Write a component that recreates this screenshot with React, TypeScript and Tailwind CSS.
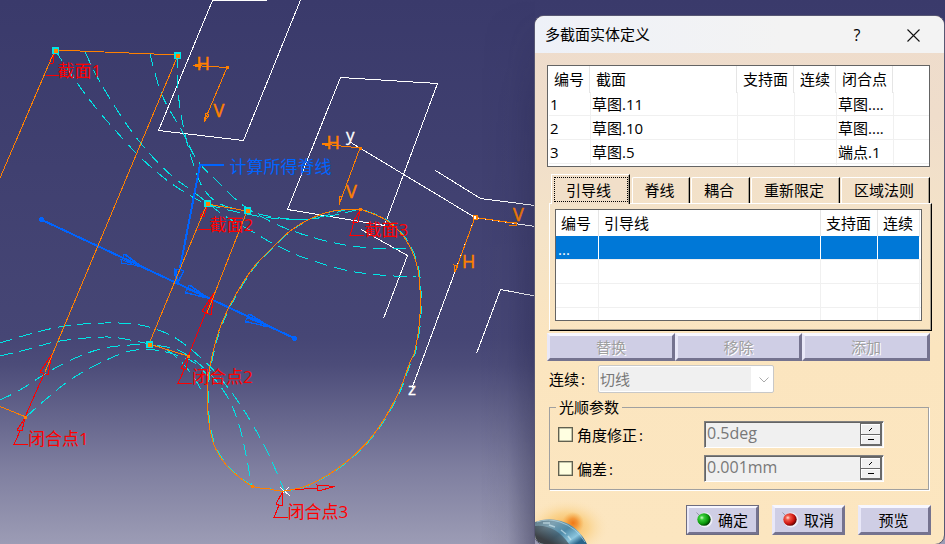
import React from "react";

type Pt = [number, number];

const UI_FONT = "font-['Open_Sans','Noto_Sans_CJK_SC',sans-serif]";

/* Smooth curve through a list of points */
function spline(p: Pt[]): string {
  let d = `M${p[0][0]} ${p[0][1]}`;
  for (let i = 0; i < p.length - 1; i++) {
    const a = p[i - 1] ?? p[i];
    const b = p[i];
    const c = p[i + 1];
    const e = p[i + 2] ?? c;
    d += `C${b[0] + (c[0] - a[0]) / 6} ${b[1] + (c[1] - a[1]) / 6} ${c[0] - (e[0] - b[0]) / 6} ${c[1] - (e[1] - b[1]) / 6} ${c[0]} ${c[1]}`;
  }
  return d;
}

const section3: Pt[] = [
  [360, 209], [333, 211], [310, 219], [290, 231], [270, 250], [253, 268], [235, 296], [221, 325], [213, 352],
  [208, 380], [208, 415], [213, 442], [221, 458], [232, 471], [252, 486], [270, 489], [284, 491], [311, 484],
  [345, 463], [374, 434], [397, 396], [410, 362], [415, 350], [420, 315], [418, 270], [406, 240], [386, 220], [360, 209],
];

const guides: Pt[][] = [
  [[55, 50], [75, 80], [96, 108], [115, 130], [138, 155], [158, 173], [178, 188], [207, 204], [247, 214], [280, 219], [310, 219], [335, 215], [360, 209]],
  [[85, 52], [100, 82], [127, 125], [150, 154], [172, 176], [195, 193], [225, 216], [255, 233], [272, 243], [302, 257], [345, 270], [380, 275], [416, 277]],
  [[150, 54], [162, 95], [182, 131], [197, 160], [218, 182], [240, 203], [262, 217], [290, 230], [330, 242], [370, 248], [410, 248]],
  [[178, 55], [178, 90], [183, 125], [192, 160], [203, 188], [220, 204], [250, 212], [280, 218], [310, 219], [345, 210]],
  [[0, 343], [30, 334], [65, 326], [105, 323], [140, 325], [172, 336], [200, 357], [222, 380], [245, 412], [267, 451], [284, 490]],
  [[0, 356], [25, 350], [60, 341], [105, 337], [130, 340], [149, 344], [180, 351], [208, 372], [228, 398], [241, 432], [252, 487]],
  [[0, 400], [20, 390], [50, 371], [80, 356], [110, 347], [149, 345], [170, 352], [190, 372], [204, 395]],
  [[26, 417], [45, 400], [70, 380], [100, 363], [130, 351], [155, 350], [176, 355], [195, 363], [212, 380]],
];

function Marker({ x, y }: { x: number; y: number }) {
  return (
    <g>
      <rect x={x - 3} y={y - 3} width="7" height="7" fill="#00e5e5" />
      <rect x={x - 1} y={y - 1} width="4" height="4" fill="#ff8000" />
    </g>
  );
}

function Viewport() {
  return (
    <svg width="945" height="544" className="block" shapeRendering="crispEdges" fill="none">
      <defs>
        <linearGradient id="sky" x1="0" y1="0" x2="0" y2="1">
          <stop offset="0" stopColor="#3a3a6b" />
          <stop offset="0.62" stopColor="#464675" />
          <stop offset="0.67" stopColor="#4c4c79" />
          <stop offset="0.86" stopColor="#7e7e9f" />
          <stop offset="1" stopColor="#9c9cb5" />
        </linearGradient>
        <linearGradient id="shade" x1="0" y1="0" x2="1" y2="0">
          <stop offset="0" stopColor="#151536" stopOpacity="0" />
          <stop offset="0.5" stopColor="#151536" stopOpacity="0.07" />
          <stop offset="1" stopColor="#151536" stopOpacity="0.4" />
        </linearGradient>
        <linearGradient id="shadeFade" x1="0" y1="0" x2="0" y2="1">
          <stop offset="0" stopColor="#000000" />
          <stop offset="0.2" stopColor="#666666" />
          <stop offset="0.7" stopColor="#999999" />
          <stop offset="1" stopColor="#ffffff" />
        </linearGradient>
        <mask id="shadeMask">
          <rect x="480" width="70" height="544" fill="url(#shadeFade)" />
        </mask>
      </defs>
      <rect width="945" height="544" fill="url(#sky)" />

      <g stroke="#ffffff">
        <path d="M266.500 .5H212.500L158.500 130.500L243.500 140.500L300.500 0" />
        <path d="M340.500 77.500L437.500 83.500L384.500 225.500L287.500 209.500Z" />
        <path d="M350 142L475 217.500L535 226.500M475 217.500L412 388" />
        <path d="M435.500 170.500L480.500 198.500L535 205.500" />
        <path d="M361 229.500L407.500 255.500L383.500 318.500" />
        <path d="M535 296L500.500 289.500L476.500 353.500" />
        <path d="M280 487l10 9M289 487l-9 9" />
      </g>

      <g stroke="#00e5e5" strokeDasharray="13 7">
        {guides.map((g, i) => (
          <path key={i} d={spline(g)} />
        ))}
        <path d={spline(section3)} strokeDasharray="12 8" transform="translate(1 0)" />
      </g>

      <g stroke="#0064ff" strokeWidth="2">
        <path d="M41 219.500L295 338.500" />
        <path d="M224 165H200L180 268" />
      </g>
      <g stroke="#0064ff">
        <path d="M140 266L124 254L121 263ZM122 258L140 266M120.500 259L139 267M125 254L140 265" />
        <path d="M206 297L189 285L185 293ZM187 289L206 297M190 285L207 297M185 292L205 298" />
        <path d="M268 326L249 314L245 322ZM247 318L268 326M250 314L269 326M245 321L267 327" />
        <path d="M175 269H179L184 271L177 282ZM176 270L178 282M174.500 268V274L177 283M184 271L178 283" />
      </g>
      <circle cx="41.500" cy="219.500" r="2.500" fill="#0064ff" />
      <circle cx="294.500" cy="338.500" r="2.500" fill="#0064ff" />

      <g stroke="#ff0000">
        <path d="M188 357L213 294M44 374L25 417" />
        <path d="M49 63H53L54 55L49 61M46 75.500H59" />
        <path d="M52 354L40 372L48 375L52 354" />
        <path d="M214 293L202 311L211 315L214 293" />
        <path d="M25 418L17 430L22 431L25 418M20 431L14 444.500H28" />
        <path d="M188 357L181 368L186 370L188 357M184 370L178 383.500H192" />
        <path d="M207 206L200 216L204 217L207 206M198 229.500H211" />
        <path d="M360 210L353 222L358 222L360 210M354 222L350 235.500H364" />
        <path d="M283 491L276 504L282 506L283 491M279 505L274 517.500H288" />
        <path d="M284 490.500L317 488M317 485L335 486.500L318 491Z" />
      </g>

      <g stroke="#ff8000">
        <path d="M0 178L55 50L178 55L45 372M0 406.500L26 417" />
        <path d="M207 313L247 211L207 204L149 344L188 356" />
        <path d={spline(section3)} />
        <path d="M193 65.500L227 67.500L204 122L206 113L209 115L204 122M193 65.500L200 64V67Z" />
        <path d="M322 144L360 148L339 205V196L342 197L339 205M322 144L329 143V146Z" />
        <path d="M475 217.500L517 223.500M509 222H516V225H509M475 217.500L455 272L454 265L458 266L455 272" />
      </g>
      <g fill="#ff8000">
        <rect x="226" y="66" width="3" height="3" />
        <rect x="359" y="147" width="3" height="3" />
        <rect x="359" y="208" width="3" height="3" />
        <rect x="187" y="355" width="3" height="3" />
        <rect x="24" y="416" width="3" height="3" />
        <rect x="251" y="485" width="3" height="3" />
        <rect x="473" y="215" width="5" height="5" />
      </g>
      <rect x="474" y="216" width="2" height="3" fill="#ffffff" />
      <Marker x={55} y={50} />
      <Marker x={177} y={55} />
      <Marker x={207} y={203} />
      <Marker x={247} y={210} />
      <Marker x={149} y={344} />

      <g className="font-['Open_Sans','Noto_Sans_CJK_SC',sans-serif] text-[17px]" fill="#ff0000">
        <text x="57.500" y="77">截面1</text>
        <text x="209.500" y="231">截面2</text>
        <text x="364.500" y="236">截面3</text>
        <text x="28" y="445">闭合点1</text>
        <text x="192" y="383">闭合点2</text>
        <text x="287.500" y="518">闭合点3</text>
        <text x="229.500" y="173" fill="#0064ff">计算所得脊线</text>
        <g fill="#ff8000" stroke="#ff8000" strokeWidth="0.5" className="text-[18px]">
          <text x="196.500" y="70">H</text>
          <text x="213.500" y="117">V</text>
          <text x="326.500" y="149">H</text>
          <text x="346" y="198">V</text>
          <text x="462" y="268">H</text>
          <text x="513" y="221">V</text>
        </g>
        <g fill="#ffffff" stroke="#ffffff" strokeWidth="0.3">
          <text x="346" y="141">y</text>
          <text x="408" y="395">z</text>
        </g>
      </g>
      <rect x="480" width="55" height="544" fill="url(#shade)" mask="url(#shadeMask)" />
    </svg>
  );
}

const TOP_COLS = "grid grid-cols-[42px_147px_57px_42px_57px_1fr]";
const GUIDE_COLS = "grid grid-cols-[43px_222px_57px_42px_1fr]";

function HeaderRow({ cols, labels, pad }: { cols: string; labels: string[]; pad: string }) {
  return (
    <div className={`${cols} h-[26px] shrink-0`}>
      {labels.map((l, i) => (
        <div key={i} className={`${pad} whitespace-nowrap border-r border-[#e5e5e5] leading-[27px] last:border-r-0`}>
          {l}
        </div>
      ))}
    </div>
  );
}

function SectionsTable() {
  const rows = [
    ["1", "草图.11", "", "", "草图....", ""],
    ["2", "草图.10", "", "", "草图....", ""],
    ["3", "草图.5", "", "", "端点.1", ""],
  ];
  return (
    <div className="ml-3 flex h-[102px] w-[383px] flex-col overflow-hidden border border-[#646464] bg-white">
      <HeaderRow cols={TOP_COLS} pad="pl-[6px]" labels={["编号", "截面", "支持面", "连续", "闭合点", ""]} />
      {rows.map((r) => (
        <div key={r[0]} className={`${TOP_COLS} h-6 shrink-0 translate-x-px border-b border-[#f0f0f0]`}>
          {r.map((c, i) => (
            <div key={i} className="whitespace-nowrap border-r border-[#f0f0f0] pl-px leading-[25px] last:border-r-0">
              {c}
            </div>
          ))}
        </div>
      ))}
    </div>
  );
}

function Tab({ label, width, gap = "" }: { label: string; width: string; gap?: string }) {
  return (
    <div
      className={`${width} ${gap} h-[26px] rounded-tl-[2px] border-l border-r border-t border-l-white border-r-black border-t-white pr-[3px] text-center leading-[25px] shadow-[inset_-1px_0_0_#a8a090]`}
    >
      {label}
    </div>
  );
}

function GuideTabs() {
  return (
    <div className="mt-[7px]">
      <div className="ml-4 flex h-[29px] items-end">
        <div className="relative z-10 h-[30px] w-[79px] shrink-0 translate-y-px border-l border-r border-t border-l-white border-r-black border-t-white bg-[#f1dfc9] p-[2px] shadow-[inset_-1px_0_0_#a8a090]">
          <div className="h-[25px] w-[74px] border border-black pr-[5px] text-center leading-[24px] [border-style:dotted]">
            引导线
          </div>
        </div>
        <Tab label="脊线" width="w-[58px]" gap="ml-[2px]" />
        <Tab label="耦合" width="w-[59px]" gap="ml-px" />
        <Tab label="重新限定" width="w-[89px]" gap="ml-px" />
        <Tab label="区域法则" width="w-[89px]" gap="ml-px" />
      </div>
      <div className="ml-[14px] h-[128px] w-[383px] border border-b-black border-l-white border-r-black border-t-white pl-[5px] pt-[5px] shadow-[inset_-1px_-1px_0_#a8a090]">
        <div className="flex h-[112px] w-[367px] flex-col overflow-hidden border border-[#646464] bg-white">
          <HeaderRow cols={GUIDE_COLS} pad="pl-[5px]" labels={["编号", "引导线", "支持面", "连续", ""]} />
          <div className={`${GUIDE_COLS} mr-[2px] h-[23px] shrink-0 bg-[#0078d7] text-white`}>
            <div className="border-r border-white pl-[2px] leading-[26px]">...</div>
            <div className="border-r border-white" />
            <div className="border-r border-white" />
            <div />
            <div />
          </div>
          {[0, 1, 2].map((r) => (
            <div key={r} className={`${GUIDE_COLS} h-6 shrink-0 border-t border-[#f0f0f0]`}>
              {[0, 1, 2, 3].map((c) => (
                <div key={c} className="border-r border-[#f0f0f0]" />
              ))}
            </div>
          ))}
        </div>
      </div>
    </div>
  );
}

const BEVEL =
  "border-[3px] border-b-[#75738f] border-l-[#e9e8f8] border-r-[#75738f] border-t-[#f7f7ff] bg-[#cfcee5]";

function EditButton({ label, width }: { label: string; width: string }) {
  return (
    <div
      className={`${BEVEL} ${width} h-7 text-center leading-[23px] text-[#a0a0a0] [text-shadow:1px_1px_0_#ffffff]`}
    >
      {label}
    </div>
  );
}

function Spinner({ value }: { value: string }) {
  return (
    <div className="flex h-[27px] w-[180px] justify-between border border-b-white border-l-[#808080] border-r-white border-t-[#808080] bg-[#f0f0f0] text-[#787878] shadow-[inset_1px_1px_0_#646464]">
      <span className="pl-[2px] text-base leading-[23px]">{value}</span>
      <div className="mr-px mt-px flex h-[23px] w-[22px] flex-col border border-[#696969] bg-[#f0f0f0]">
        <div className="flex h-[11px] items-center justify-center border-b border-r border-[#696969] shadow-[inset_1px_1px_0_#fff]">
          <svg width="5" height="5" viewBox="0 0 5 5" shapeRendering="crispEdges">
            <path d="M1 4L4 1" stroke="#000" fill="none" />
          </svg>
        </div>
        <div className="flex h-[10px] items-center justify-center border-b border-r border-[#696969] shadow-[inset_1px_1px_0_#fff]">
          <div className="h-px w-[6px] bg-black" />
        </div>
      </div>
    </div>
  );
}

function ParamRow({ label, value }: { label: string; value: string }) {
  return (
    <div className="flex h-[27px] w-full">
      <div className="mt-[6px] h-[15px] w-[15px] border border-[#606050] bg-[#ffffe1] shadow-[inset_0_0_0_0.500px_#888870]" />
      <div className="ml-1 mt-px w-[127px] leading-[27px]">
        {label}
        <span className="ml-[2px]">:</span>
      </div>
      <Spinner value={value} />
    </div>
  );
}

function Orb({ red }: { red?: boolean }) {
  const id = red ? "orbRed" : "orbGreen";
  return (
    <svg width="18" height="18" viewBox="0 0 18 18">
      <defs>
        <radialGradient id={id} cx="0.34" cy="0.36" r="0.68">
          <stop offset="0" stopColor={red ? "#ffe0d8" : "#d0ffc8"} />
          <stop offset="0.25" stopColor={red ? "#f25a4a" : "#38cc38"} />
          <stop offset="0.7" stopColor={red ? "#cc1410" : "#0a980c"} />
          <stop offset="1" stopColor={red ? "#600000" : "#003c00"} />
        </radialGradient>
      </defs>
      <circle cx="10" cy="9" r="7.500" fill="#eeeef8" />
      <path d="M1.500 1.500l3 3" stroke="#9896aa" />
      <ellipse cx="9" cy="8.500" rx="6.700" ry="6.300" fill={`url(#${id})`} />
    </svg>
  );
}

function Planet() {
  return (
    <svg width="76" height="52" viewBox="0 0 76 52" className="absolute bottom-0 left-0">
      <defs>
        <radialGradient id="glow" cx="0.42" cy="0.68" r="0.56">
          <stop offset="0" stopColor="#f5a840" stopOpacity="0.95" />
          <stop offset="0.5" stopColor="#f9c870" stopOpacity="0.6" />
          <stop offset="1" stopColor="#fbe5bf" stopOpacity="0" />
        </radialGradient>
        <radialGradient id="sun">
          <stop offset="0" stopColor="#f07818" />
          <stop offset="0.4" stopColor="#f28a28" stopOpacity="0.8" />
          <stop offset="1" stopColor="#f5a840" stopOpacity="0" />
        </radialGradient>
        <linearGradient id="globe" x1="0" y1="0" x2="1" y2="0.7">
          <stop offset="0" stopColor="#5c7684" />
          <stop offset="0.3" stopColor="#7fa2b2" />
          <stop offset="0.6" stopColor="#4f8aa8" />
          <stop offset="0.85" stopColor="#8cc6de" />
          <stop offset="1" stopColor="#2a648a" />
        </linearGradient>
        <linearGradient id="night" x1="1" y1="0" x2="0.3" y2="0.8">
          <stop offset="0" stopColor="#3a4650" stopOpacity="0" />
          <stop offset="1" stopColor="#3a3c40" stopOpacity="0.95" />
        </linearGradient>
      </defs>
      <rect width="76" height="52" fill="url(#glow)" />
      <circle cx="38" cy="31" r="11" fill="url(#sun)" />
      <path d="M0 30Q12 25 26 29Q43 34 52 52H0Z" fill="url(#globe)" />
      <path d="M0 34Q20 32 34 52H0Z" fill="url(#night)" />
      <path d="M2 30Q13 26 25 30Q41 35 50 50" stroke="#c4e4ee" strokeWidth="1" opacity="0.6" fill="none" />
      <path d="M14 33l6 2M26 38l5 4M33 44l3 4M8 31l7 0" stroke="#d8f0f6" strokeWidth="1.500" opacity="0.6" fill="none" />
    </svg>
  );
}

function Dialog() {
  return (
    <div
      className={`absolute left-[534px] top-[15px] flex h-[530px] w-[411px] flex-col overflow-hidden rounded-[10px] border border-[#575773] bg-[linear-gradient(180deg,#eedccc_0px,#efddcb_100px,#f4e3c8_210px,#fbe5bf_330px,#fce6c0_100%)] text-[15px] text-black ${UI_FONT}`}
    >
      <Planet />
      <div className="flex h-[37px] shrink-0 items-center justify-between bg-[linear-gradient(90deg,#eef1f8,#f3f3f3_60%)] pl-[10px]">
        <span className="leading-[37px]">多截面实体定义</span>
        <div className="flex items-center">
          <span className="w-[8px] text-center text-base">?</span>
          <svg width="13" height="13" viewBox="0 0 13 13" className="ml-[46px] mr-[24px] mt-px">
            <path d="M.5 .5l12 12M12.500 .5l-12 12" stroke="#111" strokeWidth="1.100" fill="none" />
          </svg>
        </div>
      </div>
      <div className="relative flex flex-col pt-3">
        <SectionsTable />
        <GuideTabs />
        <div className="ml-3 mt-[2px] flex">
          <EditButton label="替换" width="w-32" />
          <EditButton label="移除" width="w-[127px]" />
          <EditButton label="添加" width="w-32" />
        </div>
        <div className="ml-[14px] mt-1 flex h-7">
          <div className="w-[49px] leading-[29px]">
            连续<span className="ml-[2px]">:</span>
          </div>
          <div className="flex h-7 w-[176px] rounded-[2px] border border-[#c8c8c8] bg-white p-px">
            <div className="w-[151px] bg-[#f0f0f0] leading-[25px] text-[#787878]">切线</div>
            <svg width="10" height="6" viewBox="0 0 10 6" className="ml-2 mt-[10px]">
              <path d="M.5 .5L5 5L9.500 .5" stroke="#aaaaaa" fill="none" />
            </svg>
          </div>
        </div>
        <fieldset className="ml-[14px] mt-[3px] h-[94px] w-[380px] border border-[#a0a0a0] px-2 shadow-[1px_1px_0_#fff]">
          <legend className="ml-[-2px] h-[22px] px-[3px] leading-[22px]">光顺参数</legend>
          <div className="flex flex-col gap-[7px] pt-[3px]">
            <ParamRow label="角度修正" value="0.5deg" />
            <ParamRow label="偏差" value="0.001mm" />
          </div>
        </fieldset>
        <div className="ml-[151px] mt-[15px] flex gap-[13px]">
          <div className={`${BEVEL} flex h-[30px] w-[73px] items-center pl-[6px] outline outline-1 -outline-offset-1 outline-[#6d6c80]`}>
            <Orb />
            <span className="ml-[5px]">确定</span>
          </div>
          <div className={`${BEVEL} flex h-[30px] w-[73px] items-center pl-[6px]`}>
            <Orb red />
            <span className="ml-[5px]">取消</span>
          </div>
          <div className={`${BEVEL} h-[30px] w-[73px] pr-[2px] text-center leading-[25px]`}>预览</div>
        </div>
      </div>
    </div>
  );
}

export default function App() {
  return (
    <main className="relative h-[544px] w-[945px] overflow-hidden">
      <Viewport />
      <Dialog />
    </main>
  );
}
